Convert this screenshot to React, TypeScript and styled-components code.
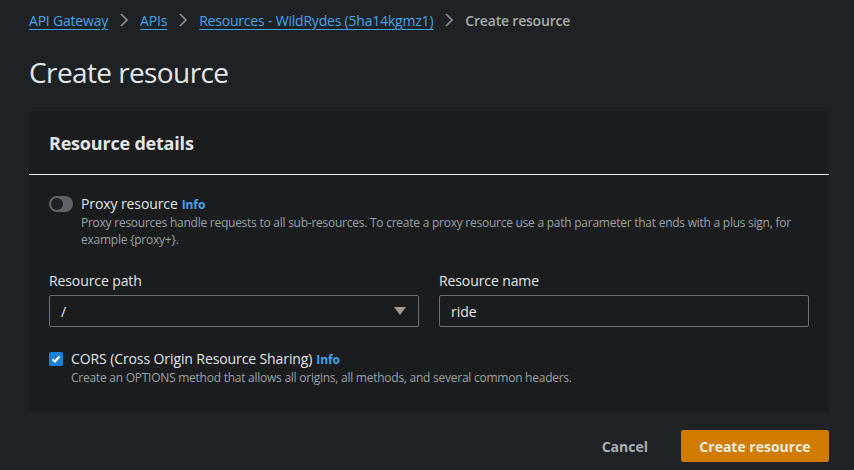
import React from "react";
import styled, { createGlobalStyle } from "styled-components";

const Global = createGlobalStyle`
  html, body { margin: 0; padding: 0; background: #1f2224; }
  body { font-family: "Open Sans", "Noto Sans", sans-serif; color: #d1d5db; }
  * { box-sizing: border-box; }
`;

const Page = styled.div`
  width: 854px;
  height: 470px;
  background: #1f2224;
  padding: 10px 25px 0 29px;
  display: flex;
  flex-direction: column;
  overflow: hidden;
`;

const Crumbs = styled.nav`
  display: flex;
  align-items: center;
  height: 20px;
  font-size: 14px;
  letter-spacing: -0.2px;
`;

const Crumb = styled.a<{ $current?: boolean }>`
  color: ${(p) => (p.$current ? "#a9aaa6" : "#44a4ec")};
  text-decoration: ${(p) => (p.$current ? "none" : "underline")};
  text-underline-offset: 3px;
  font-weight: ${(p) => (p.$current ? 600 : 400)};
  white-space: nowrap;
`;

const Sep = styled.span`
  display: inline-flex;
  width: 32px;
  justify-content: center;
  color: #8d9296;
`;

const Title = styled.h1`
  margin: 24px 0 0 0;
  font-size: 28px;
  font-weight: 400;
  color: #e4e6e7;
  line-height: 36px;
  letter-spacing: -0.6px;
`;

const Panel = styled.section`
  margin-top: 21px;
  width: 800px;
  background: #1a1c1e;
`;

const PanelHeader = styled.div`
  height: 64px;
  padding: 0 20px;
  display: flex;
  align-items: center;
  border-bottom: 1px solid #e9ebed;
  font-size: 18px;
  font-weight: 700;
  color: #e4e6e7;
  letter-spacing: -0.2px;
`;

const PanelBody = styled.div`
  padding: 20px 20px 25px 20px;
  display: flex;
  flex-direction: column;
`;

const OptionRow = styled.div`
  display: flex;
  gap: 8px;
  align-items: flex-start;
`;

const Toggle = styled.div`
  width: 24px;
  height: 16px;
  border-radius: 8px;
  background: #5f646a;
  margin-top: 1px;
  position: relative;
  flex: none;
  &::after {
    content: "";
    position: absolute;
    left: 2px;
    top: 2px;
    width: 12px;
    height: 12px;
    border-radius: 50%;
    background: #202326;
  }
`;

const Check = styled.div`
  width: 14px;
  height: 14px;
  border-radius: 2px;
  background: #1a7fd6;
  margin-top: 2px;
  flex: none;
  display: flex;
  align-items: center;
  justify-content: center;
`;

const OptionText = styled.div`
  display: flex;
  flex-direction: column;
`;

const OptionLabel = styled.div`
  font-size: 14px;
  line-height: 18px;
  color: #e4e6e7;
  letter-spacing: -0.1px;
`;

const Info = styled.span`
  color: #44a4ec;
  font-weight: 700;
  font-size: 12px;
  margin-left: 4px;
`;

const Desc = styled.div`
  font-size: 12px;
  line-height: 17px;
  color: #9ba1a6;
  letter-spacing: -0.25px;
`;

const Fields = styled.div`
  display: grid;
  grid-template-columns: 1fr 1fr;
  column-gap: 20px;
  margin-top: 24px;
`;

const Field = styled.div`
  display: flex;
  flex-direction: column;
`;

const Label = styled.label`
  font-size: 14px;
  line-height: 18px;
  color: #e4e6e7;
  margin-bottom: 5px;
  letter-spacing: -0.1px;
`;

const InputBox = styled.div`
  height: 32px;
  border: 1px solid #687078;
  border-radius: 2px;
  padding: 0 11px;
  display: flex;
  align-items: center;
  justify-content: space-between;
  font-size: 14px;
  color: #e4e6e7;
  background: #1a1c1e;
`;

const Caret = styled.span`
  width: 0;
  height: 0;
  border-left: 6px solid transparent;
  border-right: 6px solid transparent;
  border-top: 8px solid #a09a92;
  margin-right: 1px;
`;

const CorsRow = styled(OptionRow)`
  margin-top: 23px;
`;

const Footer = styled.div`
  width: 800px;
  display: flex;
  justify-content: flex-end;
  align-items: center;
  margin-top: 19px;
  gap: 12px;
`;

const LinkButton = styled.button`
  background: none;
  border: none;
  color: #a9b0b4;
  font-family: inherit;
  font-size: 14px;
  font-weight: 700;
  padding: 0 21px;
  height: 32px;
`;

const PrimaryButton = styled.button`
  background: #d07c00;
  border: 1px solid #d07c00;
  border-radius: 2px;
  color: #f0ece4;
  font-family: inherit;
  font-size: 14px;
  font-weight: 700;
  height: 32px;
  width: 148px;
`;

const Chevron = () => (
  <svg width="10" height="14" viewBox="0 0 10 14">
    <path d="M2 1l6 6-6 6" fill="none" stroke="#8d9296" strokeWidth="1.6" />
  </svg>
);

const proxyDesc =
  "Proxy resources handle requests to all sub-resources. To create a proxy resource use a path parameter that ends with a plus sign, for example {proxy+}.";

export default function App() {
  return (
    <>
      <Global />
      <Page>
        <Crumbs>
          <Crumb>API Gateway</Crumb>
          <Sep>
            <Chevron />
          </Sep>
          <Crumb>APIs</Crumb>
          <Sep>
            <Chevron />
          </Sep>
          <Crumb>Resources - WildRydes (5ha14kgmz1)</Crumb>
          <Sep>
            <Chevron />
          </Sep>
          <Crumb $current>Create resource</Crumb>
        </Crumbs>
        <Title>Create resource</Title>
        <Panel>
          <PanelHeader>Resource details</PanelHeader>
          <PanelBody>
            <OptionRow>
              <Toggle />
              <OptionText>
                <OptionLabel>
                  Proxy resource<Info>Info</Info>
                </OptionLabel>
                <Desc>{proxyDesc}</Desc>
              </OptionText>
            </OptionRow>
            <Fields>
              <Field>
                <Label>Resource path</Label>
                <InputBox>
                  <span>/</span>
                  <Caret />
                </InputBox>
              </Field>
              <Field>
                <Label>Resource name</Label>
                <InputBox>ride</InputBox>
              </Field>
            </Fields>
            <CorsRow>
              <Check>
                <svg width="10" height="10" viewBox="0 0 10 10">
                  <path d="M1.5 5.2l2.4 2.3L8.5 2.5" fill="none" stroke="#fff" strokeWidth="2" />
                </svg>
              </Check>
              <OptionText>
                <OptionLabel>
                  CORS (Cross Origin Resource Sharing)<Info>Info</Info>
                </OptionLabel>
                <Desc>Create an OPTIONS method that allows all origins, all methods, and several common headers.</Desc>
              </OptionText>
            </CorsRow>
          </PanelBody>
        </Panel>
        <Footer>
          <LinkButton>Cancel</LinkButton>
          <PrimaryButton>Create resource</PrimaryButton>
        </Footer>
      </Page>
    </>
  );
}
